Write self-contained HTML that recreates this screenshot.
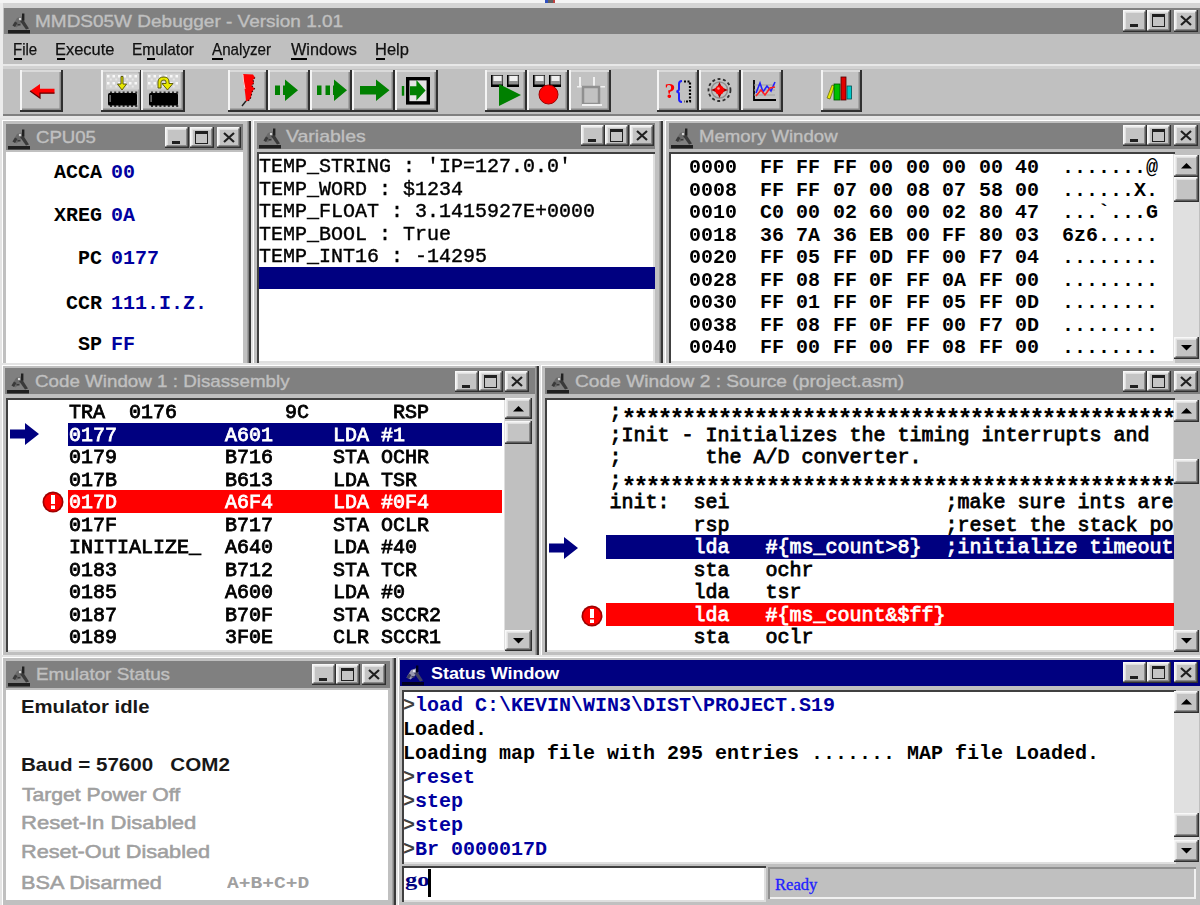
<!DOCTYPE html>
<html><head><meta charset="utf-8">
<style>
*{margin:0;padding:0;box-sizing:border-box}
html,body{width:1200px;height:905px;overflow:hidden;background:#c0c0c0;position:relative;font-family:"Liberation Sans",sans-serif}
.a{position:absolute}
.tx{position:absolute;white-space:pre;line-height:1}
.tb{position:absolute;background:#808080}
.tb.act{background:#000080}
.btn{position:absolute;background:#c4c4c4;box-shadow:inset -1.5px -1.5px 0 #303030,inset 1.5px 1.5px 0 #f8f8f8,inset -3px -3px 0 #888,inset 3px 3px 0 #e0e0e0}
.tbtn{position:absolute;background:#c2c2c2;box-shadow:inset -2px -2px 0 #303030,inset 2px 0 0 #f4f4f4,inset 0 2px 0 #dadada,inset -3.5px -3.5px 0 #888}
.fr{position:absolute;background:#c0c0c0;box-shadow:inset 2px 2px 0 #e4e4e4,inset 3px 3px 0 #fff,inset -2px -2px 0 #383838,inset -3.5px -3.5px 0 #808080}
.sk{position:absolute;box-shadow:inset 2px 2px 0 #404040,inset -2px -2px 0 #dfdfdf}
.trk{position:absolute;background:#e0e0e0}
svg{position:absolute;overflow:visible}
#wrap{position:absolute;left:0;top:0;width:1200px;height:905px;overflow:hidden;filter:blur(0.45px)}
</style></head><body><div id="wrap">

<div class="a" style="left:0px;top:0px;width:1200px;height:3px;background:#f4f4f4;"></div>
<div class="a" style="left:0px;top:3px;width:1200px;height:5px;background:#d4d4d4;"></div>
<div class="a" style="left:545px;top:0px;width:3px;height:2.5px;background:#3050c0;"></div>
<div class="a" style="left:548px;top:0px;width:5px;height:2.5px;background:#606060;"></div>
<div class="a" style="left:553px;top:0px;width:2px;height:2.5px;background:#c04040;"></div>
<div class="a" style="left:0px;top:3px;width:3px;height:902px;background:#ececec;"></div>
<div class="tb" style="left:4px;top:8px;width:1196px;height:26px"></div>
<svg style="left:6px;top:8px" width="28" height="28" viewBox="0 0 28 28">
<rect x="2" y="22" width="22" height="3.5" fill="#202020"/>
<path d="M6.5 17.5 L11 10 L17 8 L18.5 13 L15 15.5 L10.5 19.5 Z" fill="#6a6a6a"/>
<path d="M6.5 17.5 L9 13.5 L11.5 15 L9 19 Z" fill="#3a3a3a"/>
<path d="M14 13 L17.5 12 L23 20.5 L20 21.5 Z" fill="#3a3a3a"/>
<rect x="16" y="5.5" width="2.4" height="7" fill="#202020"/>
<rect x="11.5" y="16" width="3" height="1.5" fill="#3a3a3a"/>
<circle cx="14" cy="11" r="1.2" fill="#d8d8d8"/>
</svg>
<div class="tx" style="left:34.88px;top:13.00px;font-family:'Liberation Sans',sans-serif;font-size:17px;-webkit-text-stroke:0.35px currentColor;color:#c0c0c0;transform:scaleX(1.1168);transform-origin:0 0;">MMDS05W Debugger - Version 1.01</div>
<div class="btn" style="left:1123px;top:10px;width:24px;height:22px"><div class="a" style="left:7px;top:14px;width:8px;height:3px;background:#202020"></div></div>
<div class="btn" style="left:1147px;top:10px;width:24px;height:22px"><div class="a" style="left:5px;top:4px;width:13px;height:13px;border:1.5px solid #202020;border-top-width:3px"></div></div>
<div class="btn" style="left:1174px;top:10px;width:24px;height:22px"><svg style="left:5.5px;top:5px" width="12" height="11" viewBox="0 0 12 11"><path d="M1 1 L11 10 M11 1 L1 10" stroke="#202020" stroke-width="2.2"/></svg></div>
<div class="tx" style="left:13.12px;top:40.50px;font-family:'Liberation Sans',sans-serif;font-size:17px;-webkit-text-stroke:0.25px currentColor;color:#101010;transform:scaleX(0.8846);transform-origin:0 0;">File</div>
<div class="tx" style="left:55.03px;top:40.50px;font-family:'Liberation Sans',sans-serif;font-size:17px;-webkit-text-stroke:0.25px currentColor;color:#101010;transform:scaleX(0.9667);transform-origin:0 0;">Execute</div>
<div class="tx" style="left:132.09px;top:40.50px;font-family:'Liberation Sans',sans-serif;font-size:17px;-webkit-text-stroke:0.25px currentColor;color:#101010;transform:scaleX(0.9104);transform-origin:0 0;">Emulator</div>
<div class="tx" style="left:212.00px;top:40.50px;font-family:'Liberation Sans',sans-serif;font-size:17px;-webkit-text-stroke:0.25px currentColor;color:#101010;transform:scaleX(0.8939);transform-origin:0 0;">Analyzer</div>
<div class="tx" style="left:291.00px;top:40.50px;font-family:'Liberation Sans',sans-serif;font-size:17px;-webkit-text-stroke:0.25px currentColor;color:#101010;transform:scaleX(0.9565);transform-origin:0 0;">Windows</div>
<div class="tx" style="left:375.03px;top:40.50px;font-family:'Liberation Sans',sans-serif;font-size:17px;-webkit-text-stroke:0.25px currentColor;color:#101010;transform:scaleX(0.9697);transform-origin:0 0;">Help</div>
<div class="a" style="left:14px;top:58px;width:8px;height:1.5px;background:#000;"></div>
<div class="a" style="left:57px;top:58px;width:8px;height:1.5px;background:#000;"></div>
<div class="a" style="left:147px;top:58px;width:8px;height:1.5px;background:#000;"></div>
<div class="a" style="left:212px;top:58px;width:11px;height:1.5px;background:#000;"></div>
<div class="a" style="left:291px;top:58px;width:16px;height:1.5px;background:#000;"></div>
<div class="a" style="left:376px;top:58px;width:9px;height:1.5px;background:#000;"></div>
<div class="a" style="left:3px;top:64px;width:1197px;height:2px;background:#e8e8e8;"></div>
<div class="a" style="left:3px;top:66px;width:1197px;height:3px;background:#d2d2d2;"></div>
<div class="a" style="left:3px;top:114px;width:1197px;height:2px;background:#808080;"></div>
<div class="a" style="left:0px;top:116px;width:1200px;height:2px;background:#e8e8e8;"></div>
<div class="tbtn" style="left:20px;top:70px;width:43px;height:42px"></div>
<div class="tbtn" style="left:101px;top:70px;width:41px;height:42px"></div>
<div class="tbtn" style="left:141px;top:70px;width:44px;height:42px"></div>
<div class="tbtn" style="left:228px;top:70px;width:40px;height:42px"></div>
<div class="tbtn" style="left:268px;top:70px;width:42px;height:42px"></div>
<div class="tbtn" style="left:310px;top:70px;width:42px;height:42px"></div>
<div class="tbtn" style="left:352px;top:70px;width:43px;height:42px"></div>
<div class="tbtn" style="left:395px;top:70px;width:43px;height:42px"></div>
<div class="tbtn" style="left:485px;top:70px;width:42px;height:42px"></div>
<div class="tbtn" style="left:527px;top:70px;width:42px;height:42px"></div>
<div class="tbtn" style="left:569px;top:70px;width:42px;height:42px"></div>
<div class="tbtn" style="left:657px;top:70px;width:42px;height:42px"></div>
<div class="tbtn" style="left:699px;top:70px;width:42px;height:42px"></div>
<div class="tbtn" style="left:741px;top:70px;width:42px;height:42px"></div>
<div class="tbtn" style="left:821px;top:70px;width:41px;height:42px"></div>
<svg style="left:29px;top:83px" width="27" height="17" viewBox="0 0 27 17"><path d="M1 8 L11 1 L11 5.8 L25.5 5.8 L25.5 10.2 L11 10.2 L11 15 Z" fill="#ff0000"/><path d="M1 8 L11 15 L11 10.2 L25.5 10.2" fill="none" stroke="#600000" stroke-width="1.2"/></svg>
<svg style="left:103px;top:72px" width="38" height="36" viewBox="0 0 38 36"><rect x="3" y="1.5" width="33" height="16" fill="#d4d4d4"/><rect x="4.0" y="3" width="2.5" height="2.5" fill="#f8f8f8"/><rect x="4.0" y="10" width="2.5" height="2.5" fill="#f8f8f8"/><rect x="9.5" y="3" width="2.5" height="2.5" fill="#f8f8f8"/><rect x="9.5" y="10" width="2.5" height="2.5" fill="#f8f8f8"/><rect x="15.0" y="3" width="2.5" height="2.5" fill="#f8f8f8"/><rect x="15.0" y="10" width="2.5" height="2.5" fill="#f8f8f8"/><rect x="20.5" y="3" width="2.5" height="2.5" fill="#f8f8f8"/><rect x="20.5" y="10" width="2.5" height="2.5" fill="#f8f8f8"/><rect x="26.0" y="3" width="2.5" height="2.5" fill="#f8f8f8"/><rect x="26.0" y="10" width="2.5" height="2.5" fill="#f8f8f8"/><rect x="31.5" y="3" width="2.5" height="2.5" fill="#f8f8f8"/><rect x="31.5" y="10" width="2.5" height="2.5" fill="#f8f8f8"/><rect x="6.75" y="6.5" width="2" height="2" fill="#e8e8e8"/><rect x="6.75" y="13.5" width="2" height="2" fill="#e8e8e8"/><rect x="12.25" y="6.5" width="2" height="2" fill="#e8e8e8"/><rect x="12.25" y="13.5" width="2" height="2" fill="#e8e8e8"/><rect x="17.75" y="6.5" width="2" height="2" fill="#e8e8e8"/><rect x="17.75" y="13.5" width="2" height="2" fill="#e8e8e8"/><rect x="23.25" y="6.5" width="2" height="2" fill="#e8e8e8"/><rect x="23.25" y="13.5" width="2" height="2" fill="#e8e8e8"/><rect x="28.75" y="6.5" width="2" height="2" fill="#e8e8e8"/><rect x="28.75" y="13.5" width="2" height="2" fill="#e8e8e8"/><rect x="7.0" y="19.5" width="2" height="2" fill="#303030"/><rect x="7.0" y="33" width="2" height="2" fill="#303030"/><rect x="11.2" y="19.5" width="2" height="2" fill="#303030"/><rect x="11.2" y="33" width="2" height="2" fill="#303030"/><rect x="15.4" y="19.5" width="2" height="2" fill="#303030"/><rect x="15.4" y="33" width="2" height="2" fill="#303030"/><rect x="19.6" y="19.5" width="2" height="2" fill="#303030"/><rect x="19.6" y="33" width="2" height="2" fill="#303030"/><rect x="23.8" y="19.5" width="2" height="2" fill="#303030"/><rect x="23.8" y="33" width="2" height="2" fill="#303030"/><rect x="28.0" y="19.5" width="2" height="2" fill="#303030"/><rect x="28.0" y="33" width="2" height="2" fill="#303030"/><rect x="32.2" y="19.5" width="2" height="2" fill="#303030"/><rect x="32.2" y="33" width="2" height="2" fill="#303030"/><rect x="5" y="21" width="29" height="12.5" rx="1.5" fill="#000"/><rect x="6.5" y="23" width="1.2" height="7" fill="#909090"/></svg>
<svg style="left:144px;top:72px" width="38" height="36" viewBox="0 0 38 36"><rect x="3" y="1.5" width="33" height="16" fill="#d4d4d4"/><rect x="4.0" y="3" width="2.5" height="2.5" fill="#f8f8f8"/><rect x="4.0" y="10" width="2.5" height="2.5" fill="#f8f8f8"/><rect x="9.5" y="3" width="2.5" height="2.5" fill="#f8f8f8"/><rect x="9.5" y="10" width="2.5" height="2.5" fill="#f8f8f8"/><rect x="15.0" y="3" width="2.5" height="2.5" fill="#f8f8f8"/><rect x="15.0" y="10" width="2.5" height="2.5" fill="#f8f8f8"/><rect x="20.5" y="3" width="2.5" height="2.5" fill="#f8f8f8"/><rect x="20.5" y="10" width="2.5" height="2.5" fill="#f8f8f8"/><rect x="26.0" y="3" width="2.5" height="2.5" fill="#f8f8f8"/><rect x="26.0" y="10" width="2.5" height="2.5" fill="#f8f8f8"/><rect x="31.5" y="3" width="2.5" height="2.5" fill="#f8f8f8"/><rect x="31.5" y="10" width="2.5" height="2.5" fill="#f8f8f8"/><rect x="6.75" y="6.5" width="2" height="2" fill="#e8e8e8"/><rect x="6.75" y="13.5" width="2" height="2" fill="#e8e8e8"/><rect x="12.25" y="6.5" width="2" height="2" fill="#e8e8e8"/><rect x="12.25" y="13.5" width="2" height="2" fill="#e8e8e8"/><rect x="17.75" y="6.5" width="2" height="2" fill="#e8e8e8"/><rect x="17.75" y="13.5" width="2" height="2" fill="#e8e8e8"/><rect x="23.25" y="6.5" width="2" height="2" fill="#e8e8e8"/><rect x="23.25" y="13.5" width="2" height="2" fill="#e8e8e8"/><rect x="28.75" y="6.5" width="2" height="2" fill="#e8e8e8"/><rect x="28.75" y="13.5" width="2" height="2" fill="#e8e8e8"/><rect x="7.0" y="19.5" width="2" height="2" fill="#303030"/><rect x="7.0" y="33" width="2" height="2" fill="#303030"/><rect x="11.2" y="19.5" width="2" height="2" fill="#303030"/><rect x="11.2" y="33" width="2" height="2" fill="#303030"/><rect x="15.4" y="19.5" width="2" height="2" fill="#303030"/><rect x="15.4" y="33" width="2" height="2" fill="#303030"/><rect x="19.6" y="19.5" width="2" height="2" fill="#303030"/><rect x="19.6" y="33" width="2" height="2" fill="#303030"/><rect x="23.8" y="19.5" width="2" height="2" fill="#303030"/><rect x="23.8" y="33" width="2" height="2" fill="#303030"/><rect x="28.0" y="19.5" width="2" height="2" fill="#303030"/><rect x="28.0" y="33" width="2" height="2" fill="#303030"/><rect x="32.2" y="19.5" width="2" height="2" fill="#303030"/><rect x="32.2" y="33" width="2" height="2" fill="#303030"/><rect x="5" y="21" width="29" height="12.5" rx="1.5" fill="#000"/><rect x="6.5" y="23" width="1.2" height="7" fill="#909090"/></svg>
<svg style="left:116px;top:76px" width="12" height="15" viewBox="0 0 12 15"><path d="M5 0.5 H7 V8 H10.5 L6 14 L1.5 8 H5Z" fill="#e8e800" stroke="#505000" stroke-width="0.9"/></svg>
<svg style="left:155px;top:75px" width="21" height="17" viewBox="0 0 21 17"><path d="M3 13 L3 7 Q3 2 9 2 Q14 2 14 7 L14 8.5 L18 8.5 L12.5 15 L7 8.5 L11 8.5 L11 7 Q11 5 9 5 Q6 5 6 7 L6 13Z" fill="#e8e800" stroke="#505000" stroke-width="0.9"/></svg>
<svg style="left:240px;top:74px" width="18" height="33" viewBox="0 0 18 33"><path d="M3 0 L13 0.5 L15 3.5 L13 6 L14 9 L11.5 11.5 L14.5 14.5 L12 18 L11 23 L9.5 26 L6 27.5 L5.5 22 L4.5 14 L3 6 Z" fill="#ff0000"/><path d="M15 3.5 L13 6 L14 9 L11.5 11.5 L14.5 14.5 L12 18 L11 23 L9.5 26 L6 27.5" fill="none" stroke="#500000" stroke-width="1.1" stroke-dasharray="1.6 1.8"/><path d="M6 27 L2 32" stroke="#202020" stroke-width="1.4"/><path d="M3 0.5 L3.5 7 L5 15" fill="none" stroke="#ffd0d0" stroke-width="1"/></svg>
<svg style="left:274px;top:79px" width="26" height="23" viewBox="0 0 26 23"><rect x="1" y="6.5" width="5" height="9.5" fill="#008000"/><path d="M9 6.5 H11 V0.5 L24 11.2 L11 22 V16 H9Z" fill="#008000"/></svg>
<svg style="left:316px;top:79px" width="33" height="23" viewBox="0 0 33 23"><rect x="1" y="6.5" width="4.5" height="9.5" fill="#008000"/><rect x="9.5" y="6.5" width="4.5" height="9.5" fill="#008000"/><path d="M17 6.5 H18 V0.5 L31 11.2 L18 22 V16 H17Z" fill="#008000"/></svg>
<svg style="left:359px;top:79px" width="32" height="23" viewBox="0 0 32 23"><path d="M1 7 H17 V0.5 L30.5 11.2 L17 22 V15.5 H1Z" fill="#008000"/></svg>
<svg style="left:400px;top:76px" width="32" height="30" viewBox="0 0 32 30"><rect x="7.7" y="2.7" width="20.6" height="24.2" fill="#e4e4e4" stroke="#000" stroke-width="3.4"/><rect x="1.8" y="10" width="2.4" height="9.7" fill="#008000"/><path d="M10 10.2 H16.4 V4 L25.6 14.6 L16.4 24.6 V19.2 H10Z" fill="#008000"/></svg>
<svg style="left:490px;top:74px" width="32" height="16" viewBox="0 0 32 16"><rect x="1" y="1" width="12" height="12" fill="#000"/><rect x="2.5" y="1.5" width="10" height="9" fill="#909090"/><rect x="3.5" y="2" width="8" height="5" fill="#f0f0f0"/><rect x="17" y="1" width="12" height="12" fill="#000"/><rect x="18.5" y="1.5" width="10" height="9" fill="#909090"/><rect x="19.5" y="2" width="8" height="5" fill="#f0f0f0"/></svg>
<svg style="left:532px;top:74px" width="32" height="16" viewBox="0 0 32 16"><rect x="1" y="1" width="12" height="12" fill="#000"/><rect x="2.5" y="1.5" width="10" height="9" fill="#909090"/><rect x="3.5" y="2" width="8" height="5" fill="#f0f0f0"/><rect x="17" y="1" width="12" height="12" fill="#000"/><rect x="18.5" y="1.5" width="10" height="9" fill="#909090"/><rect x="19.5" y="2" width="8" height="5" fill="#f0f0f0"/></svg>
<svg style="left:498px;top:84px" width="24" height="22" viewBox="0 0 24 22"><path d="M1 0 L23 11 L1 22Z" fill="#008000"/></svg>
<svg style="left:538px;top:84px" width="21" height="21" viewBox="0 0 21 21"><circle cx="10.5" cy="10.5" r="9.5" fill="#ff0000" stroke="#a00000" stroke-width="1"/></svg>
<svg style="left:575px;top:76px" width="32" height="32" viewBox="0 0 32 32"><rect x="4" y="1" width="2" height="10" fill="#f0f0f0"/><rect x="18" y="1" width="2" height="10" fill="#f0f0f0"/><rect x="2" y="10" width="28" height="1.5" fill="#f0f0f0"/><rect x="8" y="11" width="16" height="17" fill="none" stroke="#909090" stroke-width="2.5"/><rect x="7" y="28" width="20" height="2" fill="#f0f0f0"/></svg>
<svg style="left:664px;top:80px" width="30" height="23" viewBox="0 0 30 23"><text x="0.5" y="17.5" font-family="Liberation Serif" font-weight="bold" font-size="22" fill="#ff0000">?</text><path d="M18 1 Q15 1 15 4 V9 Q15 11 12.5 11.5 Q15 12 15 14 V19 Q15 22 18 22" fill="none" stroke="#2020ff" stroke-width="2"/><path d="M20 1.5 H26 V21.5 H20" fill="none" stroke="#000" stroke-width="2.2" stroke-dasharray="2 1.5"/></svg>
<svg style="left:707px;top:78px" width="26" height="26" viewBox="0 0 26 26"><circle cx="12.5" cy="12" r="11" fill="none" stroke="#303030" stroke-width="1.8" stroke-dasharray="3 2.5"/><circle cx="12.5" cy="12" r="8" fill="none" stroke="#909090" stroke-width="1.5"/><path d="M12.5 4 L15 9.5 L21 12 L15 14.5 L12.5 20 L10 14.5 L4 12 L10 9.5Z" fill="#a00000"/><circle cx="12.5" cy="12" r="4.5" fill="#ff0000"/><circle cx="11.5" cy="10.5" r="1.3" fill="#ff9090"/></svg>
<svg style="left:752px;top:79px" width="25" height="24" viewBox="0 0 25 24"><path d="M2 1 V21 H24" fill="none" stroke="#000" stroke-width="1.8"/><path d="M2 6 H23 M2 11 H23 M2 16 H23" stroke="#a0a0a0" stroke-width="1"/><path d="M4 14 L8 4 L11 13 L15 7 L19 12 L23 3" fill="none" stroke="#2020ff" stroke-width="1.6"/><path d="M4 17 L9 11 L13 16 L18 9 L23 8" fill="none" stroke="#ff2020" stroke-width="1.6"/></svg>
<svg style="left:826px;top:76px" width="27" height="25" viewBox="0 0 27 25"><path d="M1 22 L6 9 L8.5 10 L4 23Z" fill="#e8e800" stroke="#606000" stroke-width="0.7"/><rect x="8" y="8" width="6" height="16" fill="#00c000" stroke="#005000" stroke-width="0.8"/><rect x="15" y="1" width="5" height="23" fill="#e00000" stroke="#500000" stroke-width="0.8"/><rect x="21" y="10" width="4.5" height="13" fill="#00c8c8" stroke="#005050" stroke-width="0.8"/></svg>
<div class="fr" style="left:0px;top:118px;width:251px;height:260px"></div>
<div class="tb" style="left:6px;top:124px;width:237px;height:26px"></div>
<svg style="left:6px;top:124px" width="28" height="28" viewBox="0 0 28 28">
<rect x="2" y="22" width="22" height="3.5" fill="#202020"/>
<path d="M6.5 17.5 L11 10 L17 8 L18.5 13 L15 15.5 L10.5 19.5 Z" fill="#6a6a6a"/>
<path d="M6.5 17.5 L9 13.5 L11.5 15 L9 19 Z" fill="#3a3a3a"/>
<path d="M14 13 L17.5 12 L23 20.5 L20 21.5 Z" fill="#3a3a3a"/>
<rect x="16" y="5.5" width="2.4" height="7" fill="#202020"/>
<rect x="11.5" y="16" width="3" height="1.5" fill="#3a3a3a"/>
<circle cx="14" cy="11" r="1.2" fill="#d8d8d8"/>
</svg>
<div class="tx" style="left:35.91px;top:129.00px;font-family:'Liberation Sans',sans-serif;font-size:17px;-webkit-text-stroke:0.35px currentColor;color:#c0c0c0;transform:scaleX(1.0943);transform-origin:0 0;">CPU05</div>
<div class="btn" style="left:165px;top:127px;width:24px;height:21px"><div class="a" style="left:7px;top:14px;width:8px;height:3px;background:#202020"></div></div>
<div class="btn" style="left:190px;top:127px;width:24px;height:21px"><div class="a" style="left:5px;top:4px;width:13px;height:13px;border:1.5px solid #202020;border-top-width:3px"></div></div>
<div class="btn" style="left:217px;top:127px;width:24px;height:21px"><svg style="left:5.5px;top:5px" width="12" height="11" viewBox="0 0 12 11"><path d="M1 1 L11 10 M11 1 L1 10" stroke="#202020" stroke-width="2.2"/></svg></div>
<div class="a" style="left:6px;top:152px;width:237px;height:211px;background:#fff;"></div>
<div class="fr" style="left:251px;top:118px;width:412px;height:260px"></div>
<div class="tb" style="left:257px;top:123px;width:398px;height:26px"></div>
<svg style="left:257px;top:123px" width="28" height="28" viewBox="0 0 28 28">
<rect x="2" y="22" width="22" height="3.5" fill="#202020"/>
<path d="M6.5 17.5 L11 10 L17 8 L18.5 13 L15 15.5 L10.5 19.5 Z" fill="#6a6a6a"/>
<path d="M6.5 17.5 L9 13.5 L11.5 15 L9 19 Z" fill="#3a3a3a"/>
<path d="M14 13 L17.5 12 L23 20.5 L20 21.5 Z" fill="#3a3a3a"/>
<rect x="16" y="5.5" width="2.4" height="7" fill="#202020"/>
<rect x="11.5" y="16" width="3" height="1.5" fill="#3a3a3a"/>
<circle cx="14" cy="11" r="1.2" fill="#d8d8d8"/>
</svg>
<div class="tx" style="left:286.00px;top:128.00px;font-family:'Liberation Sans',sans-serif;font-size:17px;-webkit-text-stroke:0.35px currentColor;color:#c0c0c0;transform:scaleX(1.1449);transform-origin:0 0;">Variables</div>
<div class="btn" style="left:581px;top:125px;width:24px;height:21px"><div class="a" style="left:7px;top:14px;width:8px;height:3px;background:#202020"></div></div>
<div class="btn" style="left:605px;top:125px;width:24px;height:21px"><div class="a" style="left:5px;top:4px;width:13px;height:13px;border:1.5px solid #202020;border-top-width:3px"></div></div>
<div class="btn" style="left:630px;top:125px;width:24px;height:21px"><svg style="left:5.5px;top:5px" width="12" height="11" viewBox="0 0 12 11"><path d="M1 1 L11 10 M11 1 L1 10" stroke="#202020" stroke-width="2.2"/></svg></div>
<div class="sk" style="left:257px;top:152px;width:398px;height:211px;background:#fff;"></div>
<div class="fr" style="left:663px;top:118px;width:545px;height:260px"></div>
<div class="tb" style="left:669px;top:123px;width:531px;height:26px"></div>
<svg style="left:669px;top:123px" width="28" height="28" viewBox="0 0 28 28">
<rect x="2" y="22" width="22" height="3.5" fill="#202020"/>
<path d="M6.5 17.5 L11 10 L17 8 L18.5 13 L15 15.5 L10.5 19.5 Z" fill="#6a6a6a"/>
<path d="M6.5 17.5 L9 13.5 L11.5 15 L9 19 Z" fill="#3a3a3a"/>
<path d="M14 13 L17.5 12 L23 20.5 L20 21.5 Z" fill="#3a3a3a"/>
<rect x="16" y="5.5" width="2.4" height="7" fill="#202020"/>
<rect x="11.5" y="16" width="3" height="1.5" fill="#3a3a3a"/>
<circle cx="14" cy="11" r="1.2" fill="#d8d8d8"/>
</svg>
<div class="tx" style="left:698.90px;top:128.00px;font-family:'Liberation Sans',sans-serif;font-size:17px;-webkit-text-stroke:0.35px currentColor;color:#c0c0c0;transform:scaleX(1.0952);transform-origin:0 0;">Memory Window</div>
<div class="btn" style="left:1123px;top:125px;width:24px;height:21px"><div class="a" style="left:7px;top:14px;width:8px;height:3px;background:#202020"></div></div>
<div class="btn" style="left:1147px;top:125px;width:24px;height:21px"><div class="a" style="left:5px;top:4px;width:13px;height:13px;border:1.5px solid #202020;border-top-width:3px"></div></div>
<div class="btn" style="left:1174px;top:125px;width:24px;height:21px"><svg style="left:5.5px;top:5px" width="12" height="11" viewBox="0 0 12 11"><path d="M1 1 L11 10 M11 1 L1 10" stroke="#202020" stroke-width="2.2"/></svg></div>
<div class="sk" style="left:669px;top:152px;width:506px;height:211px;background:#fff;"></div>
<div class="trk" style="left:1174px;top:155px;width:25px;height:204px;background:#e0e0e0"></div>
<div class="btn" style="left:1174px;top:155px;width:25px;height:22px"><svg style="left:7.0px;top:8px" width="11" height="6"><path d="M5.5 0 L11 5.5 L0 5.5Z" fill="#000"/></svg></div>
<div class="btn" style="left:1174px;top:337px;width:25px;height:22px"><svg style="left:7.0px;top:8px" width="11" height="6"><path d="M0 0 L11 0 L5.5 5.5Z" fill="#000"/></svg></div>
<div class="btn" style="left:1174px;top:177px;width:25px;height:25px"></div>
<div class="fr" style="left:0px;top:363px;width:539px;height:300px"></div>
<div class="tb" style="left:5px;top:368px;width:530px;height:26px"></div>
<svg style="left:5px;top:368px" width="28" height="28" viewBox="0 0 28 28">
<rect x="2" y="22" width="22" height="3.5" fill="#202020"/>
<path d="M6.5 17.5 L11 10 L17 8 L18.5 13 L15 15.5 L10.5 19.5 Z" fill="#6a6a6a"/>
<path d="M6.5 17.5 L9 13.5 L11.5 15 L9 19 Z" fill="#3a3a3a"/>
<path d="M14 13 L17.5 12 L23 20.5 L20 21.5 Z" fill="#3a3a3a"/>
<rect x="16" y="5.5" width="2.4" height="7" fill="#202020"/>
<rect x="11.5" y="16" width="3" height="1.5" fill="#3a3a3a"/>
<circle cx="14" cy="11" r="1.2" fill="#d8d8d8"/>
</svg>
<div class="tx" style="left:34.90px;top:373.00px;font-family:'Liberation Sans',sans-serif;font-size:17px;-webkit-text-stroke:0.35px currentColor;color:#c0c0c0;transform:scaleX(1.1043);transform-origin:0 0;">Code Window 1 : Disassembly</div>
<div class="btn" style="left:455px;top:371px;width:24px;height:21px"><div class="a" style="left:7px;top:14px;width:8px;height:3px;background:#202020"></div></div>
<div class="btn" style="left:479px;top:371px;width:24px;height:21px"><div class="a" style="left:5px;top:4px;width:13px;height:13px;border:1.5px solid #202020;border-top-width:3px"></div></div>
<div class="btn" style="left:505px;top:371px;width:24px;height:21px"><svg style="left:5.5px;top:5px" width="12" height="11" viewBox="0 0 12 11"><path d="M1 1 L11 10 M11 1 L1 10" stroke="#202020" stroke-width="2.2"/></svg></div>
<div class="sk" style="left:6px;top:398px;width:500px;height:254px;background:#fff;"></div>
<div class="trk" style="left:505px;top:398px;width:27px;height:253px;background:#c0c0c0"></div>
<div class="btn" style="left:505px;top:398px;width:27px;height:21px"><svg style="left:8.0px;top:8px" width="11" height="6"><path d="M5.5 0 L11 5.5 L0 5.5Z" fill="#000"/></svg></div>
<div class="btn" style="left:505px;top:630px;width:27px;height:21px"><svg style="left:8.0px;top:8px" width="11" height="6"><path d="M0 0 L11 0 L5.5 5.5Z" fill="#000"/></svg></div>
<div class="btn" style="left:505px;top:421px;width:27px;height:23px"></div>
<div class="fr" style="left:539px;top:363px;width:670px;height:300px"></div>
<div class="tb" style="left:545px;top:368px;width:655px;height:26px"></div>
<svg style="left:545px;top:368px" width="28" height="28" viewBox="0 0 28 28">
<rect x="2" y="22" width="22" height="3.5" fill="#202020"/>
<path d="M6.5 17.5 L11 10 L17 8 L18.5 13 L15 15.5 L10.5 19.5 Z" fill="#6a6a6a"/>
<path d="M6.5 17.5 L9 13.5 L11.5 15 L9 19 Z" fill="#3a3a3a"/>
<path d="M14 13 L17.5 12 L23 20.5 L20 21.5 Z" fill="#3a3a3a"/>
<rect x="16" y="5.5" width="2.4" height="7" fill="#202020"/>
<rect x="11.5" y="16" width="3" height="1.5" fill="#3a3a3a"/>
<circle cx="14" cy="11" r="1.2" fill="#d8d8d8"/>
</svg>
<div class="tx" style="left:574.87px;top:373.00px;font-family:'Liberation Sans',sans-serif;font-size:17px;-webkit-text-stroke:0.35px currentColor;color:#c0c0c0;transform:scaleX(1.1276);transform-origin:0 0;">Code Window 2 : Source (project.asm)</div>
<div class="btn" style="left:1123px;top:371px;width:24px;height:21px"><div class="a" style="left:7px;top:14px;width:8px;height:3px;background:#202020"></div></div>
<div class="btn" style="left:1147px;top:371px;width:24px;height:21px"><div class="a" style="left:5px;top:4px;width:13px;height:13px;border:1.5px solid #202020;border-top-width:3px"></div></div>
<div class="btn" style="left:1174px;top:371px;width:24px;height:21px"><svg style="left:5.5px;top:5px" width="12" height="11" viewBox="0 0 12 11"><path d="M1 1 L11 10 M11 1 L1 10" stroke="#202020" stroke-width="2.2"/></svg></div>
<div class="sk" style="left:545px;top:398px;width:630px;height:254px;background:#fff;"></div>
<div class="trk" style="left:1174px;top:400px;width:25px;height:252px;background:#c0c0c0"></div>
<div class="btn" style="left:1174px;top:400px;width:25px;height:22px"><svg style="left:7.0px;top:8px" width="11" height="6"><path d="M5.5 0 L11 5.5 L0 5.5Z" fill="#000"/></svg></div>
<div class="btn" style="left:1174px;top:630px;width:25px;height:22px"><svg style="left:7.0px;top:8px" width="11" height="6"><path d="M0 0 L11 0 L5.5 5.5Z" fill="#000"/></svg></div>
<div class="btn" style="left:1174px;top:459px;width:25px;height:25px"></div>
<div class="fr" style="left:0px;top:655px;width:396px;height:260px"></div>
<div class="tb" style="left:6px;top:661px;width:384px;height:27px"></div>
<svg style="left:6px;top:661px" width="28" height="28" viewBox="0 0 28 28">
<rect x="2" y="22" width="22" height="3.5" fill="#202020"/>
<path d="M6.5 17.5 L11 10 L17 8 L18.5 13 L15 15.5 L10.5 19.5 Z" fill="#6a6a6a"/>
<path d="M6.5 17.5 L9 13.5 L11.5 15 L9 19 Z" fill="#3a3a3a"/>
<path d="M14 13 L17.5 12 L23 20.5 L20 21.5 Z" fill="#3a3a3a"/>
<rect x="16" y="5.5" width="2.4" height="7" fill="#202020"/>
<rect x="11.5" y="16" width="3" height="1.5" fill="#3a3a3a"/>
<circle cx="14" cy="11" r="1.2" fill="#d8d8d8"/>
</svg>
<div class="tx" style="left:35.89px;top:666.00px;font-family:'Liberation Sans',sans-serif;font-size:17px;-webkit-text-stroke:0.35px currentColor;color:#c0c0c0;transform:scaleX(1.1083);transform-origin:0 0;">Emulator Status</div>
<div class="btn" style="left:312px;top:664px;width:24px;height:21px"><div class="a" style="left:7px;top:14px;width:8px;height:3px;background:#202020"></div></div>
<div class="btn" style="left:336px;top:664px;width:24px;height:21px"><div class="a" style="left:5px;top:4px;width:13px;height:13px;border:1.5px solid #202020;border-top-width:3px"></div></div>
<div class="btn" style="left:362px;top:664px;width:24px;height:21px"><svg style="left:5.5px;top:5px" width="12" height="11" viewBox="0 0 12 11"><path d="M1 1 L11 10 M11 1 L1 10" stroke="#202020" stroke-width="2.2"/></svg></div>
<div class="a" style="left:6px;top:690px;width:382px;height:210px;background:#fff;"></div>
<div class="fr" style="left:396px;top:655px;width:812px;height:260px"></div>
<div class="tb act" style="left:400px;top:660px;width:800px;height:26px"></div>
<svg style="left:400px;top:660px" width="28" height="28" viewBox="0 0 28 28">
<rect x="2" y="22" width="22" height="3.5" fill="#000020"/>
<path d="M6.5 17.5 L11 10 L17 8 L18.5 13 L15 15.5 L10.5 19.5 Z" fill="#9898b0"/>
<path d="M6.5 17.5 L9 13.5 L11.5 15 L9 19 Z" fill="#404060"/>
<path d="M14 13 L17.5 12 L23 20.5 L20 21.5 Z" fill="#404060"/>
<rect x="16" y="5.5" width="2.4" height="7" fill="#000020"/>
<rect x="11.5" y="16" width="3" height="1.5" fill="#404060"/>
<circle cx="14" cy="11" r="1.2" fill="#e8e8f0"/>
</svg>
<div class="tx" style="left:430.91px;top:665.00px;font-family:'Liberation Sans',sans-serif;font-size:16.5px;font-weight:bold;color:#fff;transform:scaleX(1.0855);transform-origin:0 0;">Status Window</div>
<div class="btn" style="left:1123px;top:662px;width:24px;height:21px"><div class="a" style="left:7px;top:14px;width:8px;height:3px;background:#202020"></div></div>
<div class="btn" style="left:1147px;top:662px;width:24px;height:21px"><div class="a" style="left:5px;top:4px;width:13px;height:13px;border:1.5px solid #202020;border-top-width:3px"></div></div>
<div class="btn" style="left:1174px;top:662px;width:24px;height:21px"><svg style="left:5.5px;top:5px" width="12" height="11" viewBox="0 0 12 11"><path d="M1 1 L11 10 M11 1 L1 10" stroke="#202020" stroke-width="2.2"/></svg></div>
<div class="sk" style="left:402px;top:690px;width:774px;height:174px;background:#fff;"></div>
<div class="trk" style="left:1174px;top:691px;width:25px;height:171px;background:#e0e0e0"></div>
<div class="btn" style="left:1174px;top:691px;width:25px;height:22px"><svg style="left:7.0px;top:8px" width="11" height="6"><path d="M5.5 0 L11 5.5 L0 5.5Z" fill="#000"/></svg></div>
<div class="btn" style="left:1174px;top:840px;width:25px;height:22px"><svg style="left:7.0px;top:8px" width="11" height="6"><path d="M0 0 L11 0 L5.5 5.5Z" fill="#000"/></svg></div>
<div class="btn" style="left:1174px;top:813px;width:25px;height:24px"></div>
<div class="sk" style="left:402px;top:866px;width:364px;height:36px;background:#fff;"></div>
<div class="a" style="left:768px;top:867px;width:428px;height:32px;background:#c0c0c0;box-shadow:inset 2px 2px 0 #909090,inset -2px -2px 0 #f0f0f0"></div>
<div class="tx" style="left:54px;top:163px;font-family:'Liberation Mono',monospace;font-size:20px;font-weight:bold;color:#000">ACCA</div>
<div class="tx" style="left:111px;top:163px;font-family:'Liberation Mono',monospace;font-size:20px;font-weight:bold;color:#0000a0">00</div>
<div class="tx" style="left:54px;top:206px;font-family:'Liberation Mono',monospace;font-size:20px;font-weight:bold;color:#000">XREG</div>
<div class="tx" style="left:111px;top:206px;font-family:'Liberation Mono',monospace;font-size:20px;font-weight:bold;color:#0000a0">0A</div>
<div class="tx" style="left:78px;top:249px;font-family:'Liberation Mono',monospace;font-size:20px;font-weight:bold;color:#000">PC</div>
<div class="tx" style="left:111px;top:249px;font-family:'Liberation Mono',monospace;font-size:20px;font-weight:bold;color:#0000a0">0177</div>
<div class="tx" style="left:66px;top:294px;font-family:'Liberation Mono',monospace;font-size:20px;font-weight:bold;color:#000">CCR</div>
<div class="tx" style="left:111px;top:294px;font-family:'Liberation Mono',monospace;font-size:20px;font-weight:bold;color:#0000a0">111.I.Z.</div>
<div class="tx" style="left:78px;top:335px;font-family:'Liberation Mono',monospace;font-size:20px;font-weight:bold;color:#000">SP</div>
<div class="tx" style="left:111px;top:335px;font-family:'Liberation Mono',monospace;font-size:20px;font-weight:bold;color:#0000a0">FF</div>
<div class="tx" style="left:259px;top:157.0px;font-family:'Liberation Mono',monospace;font-size:20px;-webkit-text-stroke:0.4px #000;color:#000">TEMP_STRING : 'IP=127.0.0'</div>
<div class="tx" style="left:259px;top:179.5px;font-family:'Liberation Mono',monospace;font-size:20px;-webkit-text-stroke:0.4px #000;color:#000">TEMP_WORD : $1234</div>
<div class="tx" style="left:259px;top:202.0px;font-family:'Liberation Mono',monospace;font-size:20px;-webkit-text-stroke:0.4px #000;color:#000">TEMP_FLOAT : 3.1415927E+0000</div>
<div class="tx" style="left:259px;top:224.5px;font-family:'Liberation Mono',monospace;font-size:20px;-webkit-text-stroke:0.4px #000;color:#000">TEMP_BOOL : True</div>
<div class="tx" style="left:259px;top:247.0px;font-family:'Liberation Mono',monospace;font-size:20px;-webkit-text-stroke:0.4px #000;color:#000">TEMP_INT16 : -14295</div>
<div class="a" style="left:259px;top:267px;width:396px;height:22px;background:#000080;"></div>
<div class="tx" style="left:689px;top:158.0px;font-family:'Liberation Mono',monospace;font-size:20px;font-weight:bold;color:#000">0000</div>
<div class="tx" style="left:760px;top:158.0px;font-family:'Liberation Mono',monospace;font-size:20px;font-weight:bold;color:#000">FF</div>
<div class="tx" style="left:796px;top:158.0px;font-family:'Liberation Mono',monospace;font-size:20px;font-weight:bold;color:#000">FF</div>
<div class="tx" style="left:833px;top:158.0px;font-family:'Liberation Mono',monospace;font-size:20px;font-weight:bold;color:#000">FF</div>
<div class="tx" style="left:869px;top:158.0px;font-family:'Liberation Mono',monospace;font-size:20px;font-weight:bold;color:#000">00</div>
<div class="tx" style="left:906px;top:158.0px;font-family:'Liberation Mono',monospace;font-size:20px;font-weight:bold;color:#000">00</div>
<div class="tx" style="left:942px;top:158.0px;font-family:'Liberation Mono',monospace;font-size:20px;font-weight:bold;color:#000">00</div>
<div class="tx" style="left:979px;top:158.0px;font-family:'Liberation Mono',monospace;font-size:20px;font-weight:bold;color:#000">00</div>
<div class="tx" style="left:1015px;top:158.0px;font-family:'Liberation Mono',monospace;font-size:20px;font-weight:bold;color:#000">40</div>
<div class="tx" style="left:1062px;top:158.0px;font-family:'Liberation Mono',monospace;font-size:20px;font-weight:bold;color:#000">.......@</div>
<div class="tx" style="left:689px;top:180.5px;font-family:'Liberation Mono',monospace;font-size:20px;font-weight:bold;color:#000">0008</div>
<div class="tx" style="left:760px;top:180.5px;font-family:'Liberation Mono',monospace;font-size:20px;font-weight:bold;color:#000">FF</div>
<div class="tx" style="left:796px;top:180.5px;font-family:'Liberation Mono',monospace;font-size:20px;font-weight:bold;color:#000">FF</div>
<div class="tx" style="left:833px;top:180.5px;font-family:'Liberation Mono',monospace;font-size:20px;font-weight:bold;color:#000">07</div>
<div class="tx" style="left:869px;top:180.5px;font-family:'Liberation Mono',monospace;font-size:20px;font-weight:bold;color:#000">00</div>
<div class="tx" style="left:906px;top:180.5px;font-family:'Liberation Mono',monospace;font-size:20px;font-weight:bold;color:#000">08</div>
<div class="tx" style="left:942px;top:180.5px;font-family:'Liberation Mono',monospace;font-size:20px;font-weight:bold;color:#000">07</div>
<div class="tx" style="left:979px;top:180.5px;font-family:'Liberation Mono',monospace;font-size:20px;font-weight:bold;color:#000">58</div>
<div class="tx" style="left:1015px;top:180.5px;font-family:'Liberation Mono',monospace;font-size:20px;font-weight:bold;color:#000">00</div>
<div class="tx" style="left:1062px;top:180.5px;font-family:'Liberation Mono',monospace;font-size:20px;font-weight:bold;color:#000">......X.</div>
<div class="tx" style="left:689px;top:203.0px;font-family:'Liberation Mono',monospace;font-size:20px;font-weight:bold;color:#000">0010</div>
<div class="tx" style="left:760px;top:203.0px;font-family:'Liberation Mono',monospace;font-size:20px;font-weight:bold;color:#000">C0</div>
<div class="tx" style="left:796px;top:203.0px;font-family:'Liberation Mono',monospace;font-size:20px;font-weight:bold;color:#000">00</div>
<div class="tx" style="left:833px;top:203.0px;font-family:'Liberation Mono',monospace;font-size:20px;font-weight:bold;color:#000">02</div>
<div class="tx" style="left:869px;top:203.0px;font-family:'Liberation Mono',monospace;font-size:20px;font-weight:bold;color:#000">60</div>
<div class="tx" style="left:906px;top:203.0px;font-family:'Liberation Mono',monospace;font-size:20px;font-weight:bold;color:#000">00</div>
<div class="tx" style="left:942px;top:203.0px;font-family:'Liberation Mono',monospace;font-size:20px;font-weight:bold;color:#000">02</div>
<div class="tx" style="left:979px;top:203.0px;font-family:'Liberation Mono',monospace;font-size:20px;font-weight:bold;color:#000">80</div>
<div class="tx" style="left:1015px;top:203.0px;font-family:'Liberation Mono',monospace;font-size:20px;font-weight:bold;color:#000">47</div>
<div class="tx" style="left:1062px;top:203.0px;font-family:'Liberation Mono',monospace;font-size:20px;font-weight:bold;color:#000">...`...G</div>
<div class="tx" style="left:689px;top:225.5px;font-family:'Liberation Mono',monospace;font-size:20px;font-weight:bold;color:#000">0018</div>
<div class="tx" style="left:760px;top:225.5px;font-family:'Liberation Mono',monospace;font-size:20px;font-weight:bold;color:#000">36</div>
<div class="tx" style="left:796px;top:225.5px;font-family:'Liberation Mono',monospace;font-size:20px;font-weight:bold;color:#000">7A</div>
<div class="tx" style="left:833px;top:225.5px;font-family:'Liberation Mono',monospace;font-size:20px;font-weight:bold;color:#000">36</div>
<div class="tx" style="left:869px;top:225.5px;font-family:'Liberation Mono',monospace;font-size:20px;font-weight:bold;color:#000">EB</div>
<div class="tx" style="left:906px;top:225.5px;font-family:'Liberation Mono',monospace;font-size:20px;font-weight:bold;color:#000">00</div>
<div class="tx" style="left:942px;top:225.5px;font-family:'Liberation Mono',monospace;font-size:20px;font-weight:bold;color:#000">FF</div>
<div class="tx" style="left:979px;top:225.5px;font-family:'Liberation Mono',monospace;font-size:20px;font-weight:bold;color:#000">80</div>
<div class="tx" style="left:1015px;top:225.5px;font-family:'Liberation Mono',monospace;font-size:20px;font-weight:bold;color:#000">03</div>
<div class="tx" style="left:1062px;top:225.5px;font-family:'Liberation Mono',monospace;font-size:20px;font-weight:bold;color:#000">6z6.....</div>
<div class="tx" style="left:689px;top:248.0px;font-family:'Liberation Mono',monospace;font-size:20px;font-weight:bold;color:#000">0020</div>
<div class="tx" style="left:760px;top:248.0px;font-family:'Liberation Mono',monospace;font-size:20px;font-weight:bold;color:#000">FF</div>
<div class="tx" style="left:796px;top:248.0px;font-family:'Liberation Mono',monospace;font-size:20px;font-weight:bold;color:#000">05</div>
<div class="tx" style="left:833px;top:248.0px;font-family:'Liberation Mono',monospace;font-size:20px;font-weight:bold;color:#000">FF</div>
<div class="tx" style="left:869px;top:248.0px;font-family:'Liberation Mono',monospace;font-size:20px;font-weight:bold;color:#000">0D</div>
<div class="tx" style="left:906px;top:248.0px;font-family:'Liberation Mono',monospace;font-size:20px;font-weight:bold;color:#000">FF</div>
<div class="tx" style="left:942px;top:248.0px;font-family:'Liberation Mono',monospace;font-size:20px;font-weight:bold;color:#000">00</div>
<div class="tx" style="left:979px;top:248.0px;font-family:'Liberation Mono',monospace;font-size:20px;font-weight:bold;color:#000">F7</div>
<div class="tx" style="left:1015px;top:248.0px;font-family:'Liberation Mono',monospace;font-size:20px;font-weight:bold;color:#000">04</div>
<div class="tx" style="left:1062px;top:248.0px;font-family:'Liberation Mono',monospace;font-size:20px;font-weight:bold;color:#000">........</div>
<div class="tx" style="left:689px;top:270.5px;font-family:'Liberation Mono',monospace;font-size:20px;font-weight:bold;color:#000">0028</div>
<div class="tx" style="left:760px;top:270.5px;font-family:'Liberation Mono',monospace;font-size:20px;font-weight:bold;color:#000">FF</div>
<div class="tx" style="left:796px;top:270.5px;font-family:'Liberation Mono',monospace;font-size:20px;font-weight:bold;color:#000">08</div>
<div class="tx" style="left:833px;top:270.5px;font-family:'Liberation Mono',monospace;font-size:20px;font-weight:bold;color:#000">FF</div>
<div class="tx" style="left:869px;top:270.5px;font-family:'Liberation Mono',monospace;font-size:20px;font-weight:bold;color:#000">0F</div>
<div class="tx" style="left:906px;top:270.5px;font-family:'Liberation Mono',monospace;font-size:20px;font-weight:bold;color:#000">FF</div>
<div class="tx" style="left:942px;top:270.5px;font-family:'Liberation Mono',monospace;font-size:20px;font-weight:bold;color:#000">0A</div>
<div class="tx" style="left:979px;top:270.5px;font-family:'Liberation Mono',monospace;font-size:20px;font-weight:bold;color:#000">FF</div>
<div class="tx" style="left:1015px;top:270.5px;font-family:'Liberation Mono',monospace;font-size:20px;font-weight:bold;color:#000">00</div>
<div class="tx" style="left:1062px;top:270.5px;font-family:'Liberation Mono',monospace;font-size:20px;font-weight:bold;color:#000">........</div>
<div class="tx" style="left:689px;top:293.0px;font-family:'Liberation Mono',monospace;font-size:20px;font-weight:bold;color:#000">0030</div>
<div class="tx" style="left:760px;top:293.0px;font-family:'Liberation Mono',monospace;font-size:20px;font-weight:bold;color:#000">FF</div>
<div class="tx" style="left:796px;top:293.0px;font-family:'Liberation Mono',monospace;font-size:20px;font-weight:bold;color:#000">01</div>
<div class="tx" style="left:833px;top:293.0px;font-family:'Liberation Mono',monospace;font-size:20px;font-weight:bold;color:#000">FF</div>
<div class="tx" style="left:869px;top:293.0px;font-family:'Liberation Mono',monospace;font-size:20px;font-weight:bold;color:#000">0F</div>
<div class="tx" style="left:906px;top:293.0px;font-family:'Liberation Mono',monospace;font-size:20px;font-weight:bold;color:#000">FF</div>
<div class="tx" style="left:942px;top:293.0px;font-family:'Liberation Mono',monospace;font-size:20px;font-weight:bold;color:#000">05</div>
<div class="tx" style="left:979px;top:293.0px;font-family:'Liberation Mono',monospace;font-size:20px;font-weight:bold;color:#000">FF</div>
<div class="tx" style="left:1015px;top:293.0px;font-family:'Liberation Mono',monospace;font-size:20px;font-weight:bold;color:#000">0D</div>
<div class="tx" style="left:1062px;top:293.0px;font-family:'Liberation Mono',monospace;font-size:20px;font-weight:bold;color:#000">........</div>
<div class="tx" style="left:689px;top:315.5px;font-family:'Liberation Mono',monospace;font-size:20px;font-weight:bold;color:#000">0038</div>
<div class="tx" style="left:760px;top:315.5px;font-family:'Liberation Mono',monospace;font-size:20px;font-weight:bold;color:#000">FF</div>
<div class="tx" style="left:796px;top:315.5px;font-family:'Liberation Mono',monospace;font-size:20px;font-weight:bold;color:#000">08</div>
<div class="tx" style="left:833px;top:315.5px;font-family:'Liberation Mono',monospace;font-size:20px;font-weight:bold;color:#000">FF</div>
<div class="tx" style="left:869px;top:315.5px;font-family:'Liberation Mono',monospace;font-size:20px;font-weight:bold;color:#000">0F</div>
<div class="tx" style="left:906px;top:315.5px;font-family:'Liberation Mono',monospace;font-size:20px;font-weight:bold;color:#000">FF</div>
<div class="tx" style="left:942px;top:315.5px;font-family:'Liberation Mono',monospace;font-size:20px;font-weight:bold;color:#000">00</div>
<div class="tx" style="left:979px;top:315.5px;font-family:'Liberation Mono',monospace;font-size:20px;font-weight:bold;color:#000">F7</div>
<div class="tx" style="left:1015px;top:315.5px;font-family:'Liberation Mono',monospace;font-size:20px;font-weight:bold;color:#000">0D</div>
<div class="tx" style="left:1062px;top:315.5px;font-family:'Liberation Mono',monospace;font-size:20px;font-weight:bold;color:#000">........</div>
<div class="tx" style="left:689px;top:338.0px;font-family:'Liberation Mono',monospace;font-size:20px;font-weight:bold;color:#000">0040</div>
<div class="tx" style="left:760px;top:338.0px;font-family:'Liberation Mono',monospace;font-size:20px;font-weight:bold;color:#000">FF</div>
<div class="tx" style="left:796px;top:338.0px;font-family:'Liberation Mono',monospace;font-size:20px;font-weight:bold;color:#000">00</div>
<div class="tx" style="left:833px;top:338.0px;font-family:'Liberation Mono',monospace;font-size:20px;font-weight:bold;color:#000">FF</div>
<div class="tx" style="left:869px;top:338.0px;font-family:'Liberation Mono',monospace;font-size:20px;font-weight:bold;color:#000">00</div>
<div class="tx" style="left:906px;top:338.0px;font-family:'Liberation Mono',monospace;font-size:20px;font-weight:bold;color:#000">FF</div>
<div class="tx" style="left:942px;top:338.0px;font-family:'Liberation Mono',monospace;font-size:20px;font-weight:bold;color:#000">08</div>
<div class="tx" style="left:979px;top:338.0px;font-family:'Liberation Mono',monospace;font-size:20px;font-weight:bold;color:#000">FF</div>
<div class="tx" style="left:1015px;top:338.0px;font-family:'Liberation Mono',monospace;font-size:20px;font-weight:bold;color:#000">00</div>
<div class="tx" style="left:1062px;top:338.0px;font-family:'Liberation Mono',monospace;font-size:20px;font-weight:bold;color:#000">........</div>
<div class="tx" style="left:69px;top:403.0px;font-family:'Liberation Mono',monospace;font-size:20px;-webkit-text-stroke:0.8px currentColor;color:#000">TRA  0176         9C       RSP</div>
<div class="a" style="left:68px;top:422.5px;width:434px;height:23px;background:#000080;"></div>
<div class="tx" style="left:69px;top:425.5px;font-family:'Liberation Mono',monospace;font-size:20px;-webkit-text-stroke:0.8px currentColor;color:#fff">0177         A601     LDA #1</div>
<div class="tx" style="left:69px;top:448.0px;font-family:'Liberation Mono',monospace;font-size:20px;-webkit-text-stroke:0.8px currentColor;color:#000">0179         B716     STA OCHR</div>
<div class="tx" style="left:69px;top:470.5px;font-family:'Liberation Mono',monospace;font-size:20px;-webkit-text-stroke:0.8px currentColor;color:#000">017B         B613     LDA TSR</div>
<div class="a" style="left:68px;top:490.0px;width:434px;height:23px;background:#ff0000;"></div>
<div class="tx" style="left:69px;top:493.0px;font-family:'Liberation Mono',monospace;font-size:20px;-webkit-text-stroke:0.8px currentColor;color:#fff">017D         A6F4     LDA #0F4</div>
<div class="tx" style="left:69px;top:515.5px;font-family:'Liberation Mono',monospace;font-size:20px;-webkit-text-stroke:0.8px currentColor;color:#000">017F         B717     STA OCLR</div>
<div class="tx" style="left:69px;top:538.0px;font-family:'Liberation Mono',monospace;font-size:20px;-webkit-text-stroke:0.8px currentColor;color:#000">INITIALIZE_  A640     LDA #40</div>
<div class="tx" style="left:69px;top:560.5px;font-family:'Liberation Mono',monospace;font-size:20px;-webkit-text-stroke:0.8px currentColor;color:#000">0183         B712     STA TCR</div>
<div class="tx" style="left:69px;top:583.0px;font-family:'Liberation Mono',monospace;font-size:20px;-webkit-text-stroke:0.8px currentColor;color:#000">0185         A600     LDA #0</div>
<div class="tx" style="left:69px;top:605.5px;font-family:'Liberation Mono',monospace;font-size:20px;-webkit-text-stroke:0.8px currentColor;color:#000">0187         B70F     STA SCCR2</div>
<div class="tx" style="left:69px;top:628.0px;font-family:'Liberation Mono',monospace;font-size:20px;-webkit-text-stroke:0.8px currentColor;color:#000">0189         3F0E     CLR SCCR1</div>
<svg style="left:10px;top:423px" width="30" height="22" viewBox="0 0 30 22"><path d="M0 6.5 H15 V0 L29 11 L15 22 V15.5 H0Z" fill="#000080"/></svg>
<svg style="left:42px;top:491px" width="22" height="22" viewBox="0 0 22 22"><circle cx="11" cy="11" r="10.5" fill="#a00000"/><circle cx="11" cy="11" r="8.8" fill="#ff0000"/><rect x="9" y="4" width="4" height="9" fill="#fff"/><rect x="9" y="14.5" width="4" height="3.5" fill="#fff"/></svg>
<div class="a" style="left:547px;top:400px;width:627px;height:250px;overflow:hidden">
<div class="tx" style="left:74.5px;top:8.0px;font-family:'Liberation Mono',monospace;font-weight:bold;font-size:25px;letter-spacing:-3px;color:#000">**************************************************</div>
<div class="tx" style="left:62.5px;top:3.0px;font-family:'Liberation Mono',monospace;font-size:20px;-webkit-text-stroke:0.8px currentColor;color:#000">;</div>
<div class="tx" style="left:62.5px;top:25.5px;font-family:'Liberation Mono',monospace;font-size:20px;-webkit-text-stroke:0.8px currentColor;color:#000">;Init - Initializes the timing interrupts and</div>
<div class="tx" style="left:62.5px;top:48.0px;font-family:'Liberation Mono',monospace;font-size:20px;-webkit-text-stroke:0.8px currentColor;color:#000">;       the A/D converter.</div>
<div class="tx" style="left:74.5px;top:75.5px;font-family:'Liberation Mono',monospace;font-weight:bold;font-size:25px;letter-spacing:-3px;color:#000">**************************************************</div>
<div class="tx" style="left:62.5px;top:70.5px;font-family:'Liberation Mono',monospace;font-size:20px;-webkit-text-stroke:0.8px currentColor;color:#000">;</div>
<div class="tx" style="left:62.5px;top:93.0px;font-family:'Liberation Mono',monospace;font-size:20px;-webkit-text-stroke:0.8px currentColor;color:#000">init:  sei                  ;make sure ints are</div>
<div class="tx" style="left:62.5px;top:115.5px;font-family:'Liberation Mono',monospace;font-size:20px;-webkit-text-stroke:0.8px currentColor;color:#000">       rsp                  ;reset the stack po</div>
<div class="a" style="left:59px;top:135.0px;width:600px;height:23.5px;background:#000080"></div>
<div class="tx" style="left:62.5px;top:138.0px;font-family:'Liberation Mono',monospace;font-size:20px;-webkit-text-stroke:0.8px currentColor;color:#fff">       lda   #{ms_count>8}  ;initialize timeout</div>
<div class="tx" style="left:62.5px;top:160.5px;font-family:'Liberation Mono',monospace;font-size:20px;-webkit-text-stroke:0.8px currentColor;color:#000">       sta   ochr</div>
<div class="tx" style="left:62.5px;top:183.0px;font-family:'Liberation Mono',monospace;font-size:20px;-webkit-text-stroke:0.8px currentColor;color:#000">       lda   tsr</div>
<div class="a" style="left:59px;top:202.5px;width:600px;height:23.5px;background:#ff0000"></div>
<div class="tx" style="left:62.5px;top:205.5px;font-family:'Liberation Mono',monospace;font-size:20px;-webkit-text-stroke:0.8px currentColor;color:#fff">       lda   #{ms_count&amp;$ff}</div>
<div class="tx" style="left:62.5px;top:228.0px;font-family:'Liberation Mono',monospace;font-size:20px;-webkit-text-stroke:0.8px currentColor;color:#000">       sta   oclr</div>
</div>
<svg style="left:549px;top:537px" width="30" height="22" viewBox="0 0 30 22"><path d="M0 6.5 H15 V0 L29 11 L15 22 V15.5 H0Z" fill="#000080"/></svg>
<svg style="left:581px;top:605px" width="22" height="22" viewBox="0 0 22 22"><circle cx="11" cy="11" r="10.5" fill="#a00000"/><circle cx="11" cy="11" r="8.8" fill="#ff0000"/><rect x="9" y="4" width="4" height="9" fill="#fff"/><rect x="9" y="14.5" width="4" height="3.5" fill="#fff"/></svg>
<div class="tx" style="left:20.93px;top:696.50px;font-family:'Liberation Sans',sans-serif;font-size:19px;font-weight:bold;color:#181818;transform:scaleX(1.0672);transform-origin:0 0;">Emulator idle</div>
<div class="tx" style="left:20.92px;top:755.00px;font-family:'Liberation Sans',sans-serif;font-size:19px;font-weight:bold;color:#181818;transform:scaleX(1.0838);transform-origin:0 0;">Baud = 57600   COM2</div>
<div class="tx" style="left:22.00px;top:784.50px;font-family:'Liberation Sans',sans-serif;font-size:19px;-webkit-text-stroke:0.55px currentColor;color:#a0a0a0;transform:scaleX(1.1119);transform-origin:0 0;">Target Power Off</div>
<div class="tx" style="left:20.84px;top:812.50px;font-family:'Liberation Sans',sans-serif;font-size:19px;-webkit-text-stroke:0.55px currentColor;color:#a0a0a0;transform:scaleX(1.1611);transform-origin:0 0;">Reset-In Disabled</div>
<div class="tx" style="left:20.86px;top:841.50px;font-family:'Liberation Sans',sans-serif;font-size:19px;-webkit-text-stroke:0.55px currentColor;color:#a0a0a0;transform:scaleX(1.1402);transform-origin:0 0;">Reset-Out Disabled</div>
<div class="tx" style="left:20.86px;top:872.50px;font-family:'Liberation Sans',sans-serif;font-size:19px;-webkit-text-stroke:0.55px currentColor;color:#a0a0a0;transform:scaleX(1.1393);transform-origin:0 0;">BSA Disarmed</div>
<div class="tx" style="left:227.00px;top:876.00px;font-family:'Liberation Mono',monospace;font-size:16px;font-weight:bold;color:#a0a0a0;transform:scaleX(1.2239);transform-origin:0 0;">A+B+C+D</div>
<div class="tx" style="left:403px;top:696px;font-family:'Liberation Mono',monospace;font-size:20px;font-weight:bold;color:#404040">&gt;<span style='color:#0000a0'>load C:\KEVIN\WIN3\DIST\PROJECT.S19</span></div>
<div class="tx" style="left:403px;top:720px;font-family:'Liberation Mono',monospace;font-size:20px;font-weight:bold;color:#000">Loaded.</div>
<div class="tx" style="left:403px;top:744px;font-family:'Liberation Mono',monospace;font-size:20px;font-weight:bold;color:#000">Loading map file with 295 entries ....... MAP file Loaded.</div>
<div class="tx" style="left:403px;top:768px;font-family:'Liberation Mono',monospace;font-size:20px;font-weight:bold;color:#404040">&gt;<span style='color:#0000a0'>reset</span></div>
<div class="tx" style="left:403px;top:792px;font-family:'Liberation Mono',monospace;font-size:20px;font-weight:bold;color:#404040">&gt;<span style='color:#0000a0'>step</span></div>
<div class="tx" style="left:403px;top:816px;font-family:'Liberation Mono',monospace;font-size:20px;font-weight:bold;color:#404040">&gt;<span style='color:#0000a0'>step</span></div>
<div class="tx" style="left:403px;top:840px;font-family:'Liberation Mono',monospace;font-size:20px;font-weight:bold;color:#404040">&gt;<span style='color:#0000a0'>Br 0000017D</span></div>
<div class="tx" style="left:404.71px;top:870.00px;font-family:'Liberation Serif',serif;font-size:19px;font-weight:bold;color:#000080;transform:scaleX(1.2941);transform-origin:0 0;">go</div>
<div class="a" style="left:428px;top:869px;width:3px;height:28px;background:#000;"></div>
<div class="tx" style="left:775.02px;top:876.00px;font-family:'Liberation Serif',serif;font-size:17px;-webkit-text-stroke:0.3px currentColor;color:#2020ff;transform:scaleX(0.9767);transform-origin:0 0;">Ready</div>
</div></body></html>
